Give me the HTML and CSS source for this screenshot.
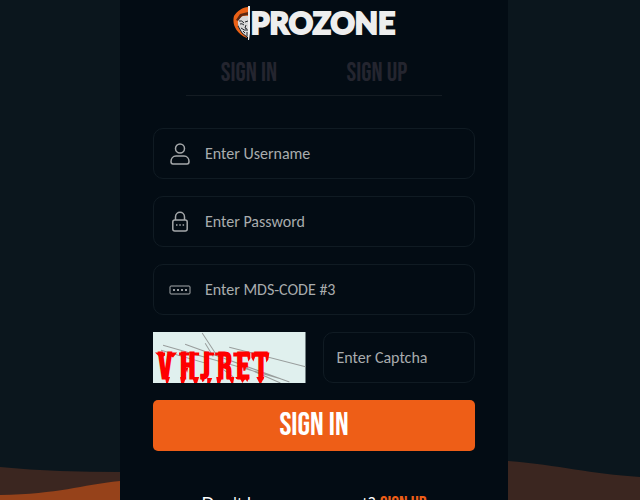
FILE: index.html
```
<!DOCTYPE html>
<html lang="en">
<head>
<meta charset="utf-8">
<title>Sign in</title>
<link rel="stylesheet" href="styles.css">
</head>
<body>
<svg class="waves" viewBox="0 0 640 40" preserveAspectRatio="none" aria-hidden="true">
  <path fill="#3b2620" d="M0 7C40 11 80 12 120 12C260 12 380-8 508 1C560 5 590 14 640 17V40H0Z"/>
  <path fill="#96421a" d="M0 35C60 34 80 25 120 21C250 5 400 30 480 40H0Z"/>
</svg>
<main class="panel">
  <h1 class="logo">
    <svg class="mask" viewBox="0 0 18 34" aria-hidden="true">
      <path fill="#ea6116" d="M15 1C10 1 4 5 1 10C-1 17 2 27 14 32V28L5 20L6 12L15 10Z"/>
      <path fill="#d8d8d8" d="M15 10C10 9 7 11 5 14C4 21 8 28 15 31Z"/>
      <path fill="#5d2812" d="M3 14L7 8L15 6V9L9 10L5 15Z"/>
      <path fill="none" stroke="#22272c" stroke-width="1" d="M6 15Q9 14 11 17M7 18Q9 17 11 19M12 16L15 15M13 19L12 22L14 23M8 22Q11 25 15 24M10 25L12 27M14 26V30M5 20L9 27L14 31"/>
      <path fill="#eee" d="M15 0H17V27L16 34H15Z"/>
    </svg>
    <span>PROZONE</span>
  </h1>
  <nav class="tabs">
    <a href="#signin">SIGN IN</a>
    <a href="#signup">SIGN UP</a>
  </nav>
  <form class="form" id="signin">
    <label class="field">
      <svg class="icon" viewBox="0 0 22 22" aria-hidden="true"><circle cx="11" cy="5.500" r="4.500"/><path d="M7 13H15C18 13 20 15.500 20 18.500Q20 21 18 21H4Q2 21 2 18.500C2 15.500 4 13 7 13Z"/></svg>
      <input type="text" placeholder="Enter Username" aria-label="Username">
    </label>
    <label class="field">
      <svg class="icon" viewBox="0 0 22 22" aria-hidden="true"><path d="M6.500 9V6C6.500-.2 15.500-.2 15.500 6V9"/><rect x="3.800" y="9" width="14.400" height="11" rx="2"/><path d="M7 14H8.500M10.300 14H11.800M13.600 14H15.100"/></svg>
      <input type="password" placeholder="Enter Password" aria-label="Password">
    </label>
    <label class="field">
      <svg class="icon" viewBox="0 0 22 22" aria-hidden="true"><rect class="thin" x="1" y="7" width="20" height="8" rx="1"/><path d="M4 11H6M8 11H10M12 11H14M16 11H18M5 10V12M9 10V12M13 10V12M17 10V12"/></svg>
      <input type="text" placeholder="Enter MDS-CODE #3" aria-label="MDS code">
    </label>
    <div class="captcha-row">
      <svg class="captcha" viewBox="0 0 152 50" preserveAspectRatio="none" role="img" aria-label="Captcha">
        <rect width="152" height="50" fill="#e0f0ee"/>
        <path class="scratch" d="M49 1L63 22M52 11L60 24M10 13L128 46M8 18L54 31M32 12L136 49M76 15L152 34M66 34L80 44M90 34L127 50"/>
        <text class="captcha-text" y="46" x="5 27 47 64 83 101">VHJRET</text>
        <path fill="red" d="M2 20H12V23L9 25L6 24ZM17 20H24L20 25L18 24ZM26 20H36V23H26ZM38 20H46V23H38ZM51 20H61V23H52ZM62 20H68V23H62ZM80 20H97V26L95 29L94 24H80ZM98 20H116L115 27L113 30L112 24H102L100 29L98 25ZM12 44H17L15 50H13ZM27 44H33L31 50H28ZM39 44H46L44 50H41ZM47 41H52L51 48L49 49ZM54 45H59L57 50H54ZM63 44H69L67 50H64ZM75 44H81L80 50H78ZM82 44H96L94 49L92 46L89 50L87 46H83ZM103 44H111L108 50H106ZM90 33H93L92 38H90ZM32 35H35L34 40Z"/>
      </svg>
      <label class="field"><input type="text" placeholder="Enter Captcha" aria-label="Captcha code"></label>
    </div>
    <button class="submit" type="submit">SIGN IN</button>
  </form>
  <p class="footer">Don't have an account? <a href="#signup">SIGN UP</a></p>
</main>
</body>
</html>
```
FILE: styles.css
```
* { box-sizing: border-box; }
html, body { height: 100%; }
body {
  margin: 0;
  padding-right: 12px;
  overflow: hidden;
  background: #0b161d;
  color: #fff;
  font-family: Lato, sans-serif;
}
.waves {
  position: absolute;
  left: 0;
  bottom: 0;
  width: 100%;
  height: 40px;
  overflow: visible;
}
.panel {
  position: relative;
  max-width: 388px;
  min-height: 100%;
  margin: 0 auto;
  padding: 5px 33px 0;
  background: #030c14;
}
.logo {
  display: flex;
  justify-content: center;
  align-items: center;
  height: 35px;
  margin: 0;
  color: #eee;
  font-size: 30px;
  font-weight: 900;
  line-height: 35px;
  -webkit-text-stroke: 2px #eee;
  paint-order: stroke fill;
}
.mask { width: 18px; height: 34px; }
.tabs {
  display: flex;
  justify-content: space-around;
  height: 56px;
  margin: 0 33px 32px;
  padding-top: 20px;
  border-bottom: 1px solid #141c23;
}
.tabs a, .submit, .footer a {
  font-family: "Bebas Neue", Roboto, sans-serif;
  font-weight: 400;
  text-decoration: none;
}
.tabs a { color: #24252f; font-size: 26px; line-height: 28px; }
.form { display: flex; flex-direction: column; gap: 17px; }
.field {
  display: flex;
  align-items: center;
  gap: 14px;
  height: 51px;
  padding: 0 13px 0 15px;
  border: 1px solid #101b23;
  border-radius: 10px;
}
.field input {
  flex: 1;
  min-width: 0;
  padding: 0;
  border: 0;
  outline: 0;
  background: none;
  color: #ababab;
  font: 16px/22px Carlito, Lato, sans-serif;
}
.field input::placeholder { color: #a9acae; opacity: 1; }
.icon {
  flex: none;
  width: 22px;
  height: 22px;
  fill: none;
  stroke: #a5a8aa;
  stroke-width: 1.5;
}
.icon .thin { stroke-width: 1; }
.captcha-row { display: grid; grid-template-columns: repeat(2, minmax(0, 1fr)); gap: 17px; }
.captcha-row .field { padding-left: 13px; }
.captcha { display: block; width: 100%; height: 51px; }
.captcha-text {
  fill: red;
  font: 700 37px "Bebas Neue", Roboto, sans-serif;
}
.scratch { fill: none; stroke: #999e9d; stroke-width: 1; }
.submit {
  height: 51px;
  border: 0;
  border-radius: 5px;
  background: #ee5e17;
  color: #fff;
  font-size: 32px;
}
.footer { margin: 42px 0 0; font-size: 17px; line-height: 22px; text-align: center; }
.footer a { color: #ee5e17; font-size: 20px; }
```
